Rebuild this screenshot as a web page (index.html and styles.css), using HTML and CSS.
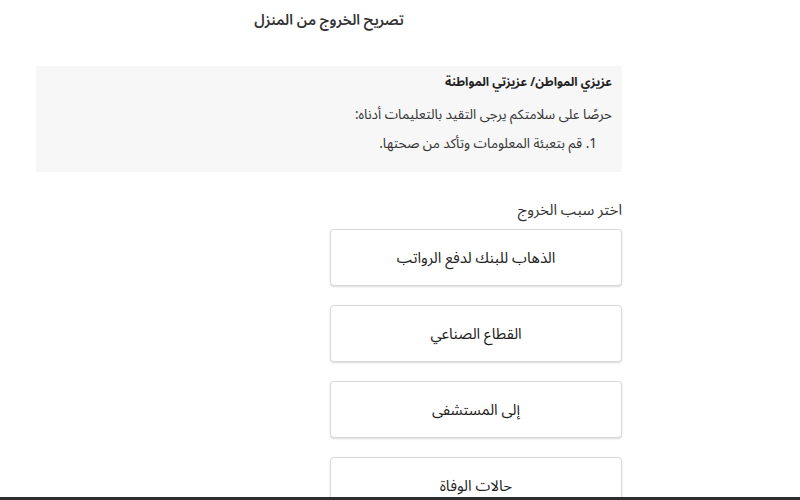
FILE: index.html
```html
<!DOCTYPE html>
<html lang="ar" dir="rtl">
<head>
<meta charset="utf-8">
<title>تصريح الخروج من المنزل</title>
<link rel="stylesheet" href="styles.css">
</head>
<body>
<main class="page">
  <h1 class="title">تصريح الخروج من المنزل</h1>
  <section class="notice">
    <p class="notice-head">عزيزي المواطن/ عزيزتي المواطنة</p>
    <p class="notice-text">حرصًا على سلامتكم يرجى التقيد بالتعليمات أدناه:</p>
    <ol class="notice-list">
      <li>قم بتعبئة المعلومات وتأكد من صحتها.</li>
    </ol>
  </section>
  <p class="label">اختر سبب الخروج</p>
  <div class="options">
    <button class="option">الذهاب للبنك لدفع الرواتب</button>
    <button class="option">القطاع الصناعي</button>
    <button class="option">إلى المستشفى</button>
    <button class="option">حالات الوفاة</button>
  </div>
</main>
<div class="bottom-bar"></div>
</body>
</html>
```
FILE: styles.css
```css
html, body {
  margin: 0;
  padding: 0;
  background: #ffffff;
  overflow: hidden;
}
body {
  font-family: "Noto Sans Arabic", "DejaVu Sans", "Noto Sans", sans-serif;
  color: #333333;
  direction: rtl;
}
.page {
  width: 586px;
  margin-right: 178px;
}
.title {
  font-size: 14.5px;
  font-weight: 600;
  line-height: 28px;
  margin: 7px 0 0;
  text-align: center;
  color: #333;
}
.notice {
  margin-top: 31px;
  background: #f7f7f7;
  height: 106px;
  box-sizing: border-box;
  padding: 6px 10px 0 0;
}
.notice p, .notice ol {
  margin: 0;
}
.notice-head {
  font-size: 12px;
  font-weight: 700;
  line-height: 22px;
  color: #222;
}
.notice-text {
  font-size: 13.5px;
  line-height: 22px;
  margin-top: 10px !important;
  color: #333;
}
.notice-list {
  font-size: 13.5px;
  line-height: 22px;
  margin-top: 7px !important;
  padding: 0 15px 0 0;
  list-style-position: inside;
  color: #333;
}
.label {
  margin: 27px 0 0;
  font-size: 15px;
  line-height: 22px;
  color: #333;
}
.options {
  display: flex;
  flex-direction: column;
  gap: 19px;
  width: 292px;
  margin-top: 8px;
}
.option {
  height: 57px;
  background: #fff;
  border: 1px solid #d9d9d9;
  border-radius: 4px;
  box-shadow: 0 1px 2px rgba(0,0,0,0.15);
  font-family: inherit;
  font-size: 15px;
  color: #222;
  cursor: pointer;
}
.bottom-bar {
  position: fixed;
  left: 0;
  right: 0;
  bottom: 0;
  height: 3px;
  background: #2e2e2e;
}
```
